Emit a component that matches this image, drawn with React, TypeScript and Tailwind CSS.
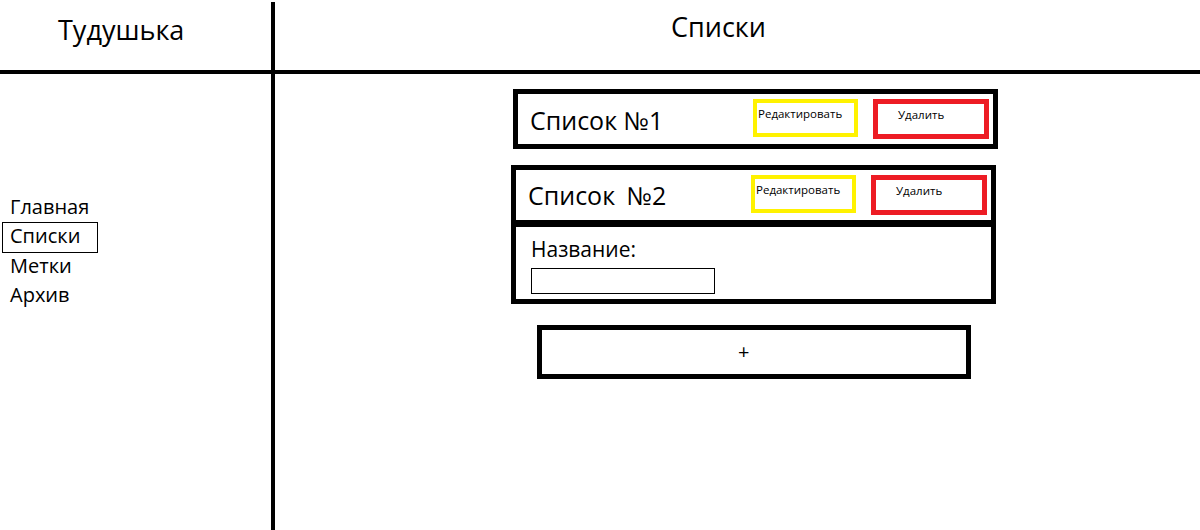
const font = { fontFamily: '"Open Sans", "Noto Sans", sans-serif' };

function ListCard({ name, num, offset, gap }: { name: string; num: string; offset: string; gap: string }) {
  return (
    <div className="flex items-start h-[50px] pt-[5px] pr-[4px]">
      <div className={`flex-1 pl-[12px] ${offset} text-[25px] leading-none text-black`}>
        {name} <span className={gap}>{num}</span>
      </div>
      <div className="w-[105px] h-[38px] border-[4px] border-[#fff200] pl-[1px] pt-[5px] text-[11.5px] leading-none text-black">
        Редактировать
      </div>
      <div className="ml-[15px] w-[116px] h-[40px] border-[5px] border-[#ed1c24] pl-[20px] pt-[5px] text-[11.5px] leading-none text-black">
        Удалить
      </div>
    </div>
  );
}

export default function App() {
  const nav = ["Главная", "Списки", "Метки", "Архив"];

  return (
    <div className="w-[1200px] h-[530px] bg-white flex flex-col overflow-hidden" style={font}>
      <header className="flex h-[74px] border-b-[4px] border-black">
        <div className="w-[275px] border-r-[4px] border-black mt-[2px] pl-[58px] pt-[14px] text-[27px] leading-none text-black">
          Тудушька
        </div>
        <div className="flex-1 pl-[396px] pt-[13px] text-[27px] leading-none text-black">Списки</div>
      </header>

      <div className="flex flex-1">
        <aside className="w-[275px] border-r-[4px] border-black pt-[118px]">
          <ul className="text-[20px] leading-[29px] text-black">
            {nav.map((item) => (
              <li key={item} className="h-[29px]">
                {item === "Списки" ? (
                  <div className="mt-[1px] ml-[2px] w-[96px] h-[31px] border border-black pl-[7px] leading-[25px]">
                    {item}
                  </div>
                ) : (
                  <div className="pl-[10px]">{item}</div>
                )}
              </li>
            ))}
          </ul>
        </aside>

        <main className="flex-1 pt-[15px] pl-[236px]">
          <div className="w-[485px] ml-[2px] h-[60px] border-[5px] border-black">
            <ListCard name="Список" num="№1" offset="pt-[9px]" gap="" />
          </div>

          <div className="w-[485px] mt-[16px] border-[5px] border-black">
            <ListCard name="Список" num="№2" offset="pt-[8px]" gap="ml-[5px]" />
            <div className="border-t-[7px] border-black h-[79px] pl-[15px] pt-[10px]">
              <div className="text-[21px] leading-[24px] text-black">Название:</div>
              <input className="block mt-[7px] w-[184px] h-[26px] border border-black outline-none" />
            </div>
          </div>

          <button className="mt-[21px] ml-[26px] w-[434px] h-[54px] border-[5px] border-black flex items-center pl-[196px] text-[20px] leading-none text-black">
            +
          </button>
        </main>
      </div>
    </div>
  );
}
